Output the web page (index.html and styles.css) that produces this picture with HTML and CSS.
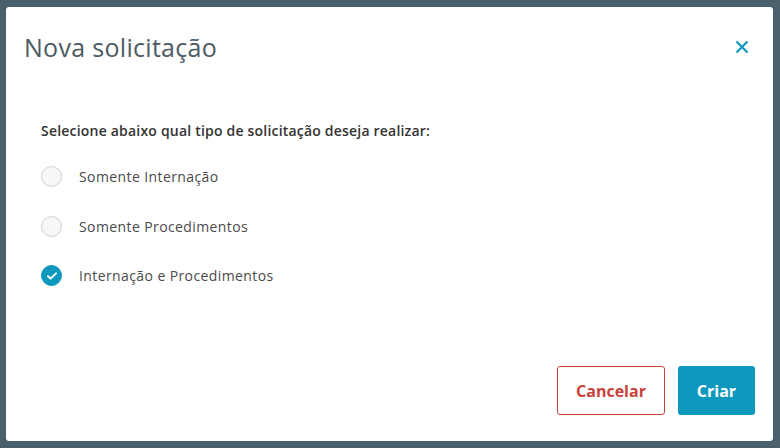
FILE: index.html
```html
<!DOCTYPE html>
<html lang="pt">
<head>
<meta charset="utf-8">
<link rel="stylesheet" href="styles.css">
</head>
<body>
<div class="dialog">
  <div class="header">
    <h1 class="title">Nova solicitação</h1>
    <button class="close" aria-label="Fechar">
      <svg width="14" height="14" viewBox="0 0 14 14"><path d="M1.5 1.5 L12.5 12.5 M12.5 1.5 L1.5 12.5" stroke="#0e98bd" stroke-width="2.2" stroke-linecap="butt"/></svg>
    </button>
  </div>
  <div class="body">
    <p class="label">Selecione abaixo qual tipo de solicitação deseja realizar:</p>
    <div class="options">
      <div class="option"><span class="radio"></span><span class="opt-text">Somente Internação</span></div>
      <div class="option"><span class="radio"></span><span class="opt-text">Somente Procedimentos</span></div>
      <div class="option"><span class="radio checked"><svg width="12" height="10" viewBox="0 0 12 10"><path d="M2 5.2 L4.6 7.6 L10 2.4" fill="none" stroke="#fff" stroke-width="2" stroke-linecap="round" stroke-linejoin="round"/></svg></span><span class="opt-text">Internação e Procedimentos</span></div>
    </div>
  </div>
  <div class="footer">
    <button class="btn btn-cancel">Cancelar</button>
    <button class="btn btn-primary">Criar</button>
  </div>
</div>
</body>
</html>
```
FILE: styles.css
```css
html, body {
  margin: 0;
  padding: 0;
}
body {
  width: 780px;
  height: 448px;
  background: #4a606c;
  font-family: "Open Sans", "Lato", sans-serif;
  padding: 7px 7px 7px 6px;
  box-sizing: border-box;
}
.dialog {
  background: #fff;
  width: 767px;
  height: 434px;
  border-radius: 3px;
  display: flex;
  flex-direction: column;
  box-sizing: border-box;
}
.header {
  display: flex;
  align-items: center;
  justify-content: space-between;
  padding: 25px 24px 0 18px;
  height: 54px;
  box-sizing: border-box;
}
.title {
  margin: 0;
  font-size: 25px;
  font-weight: 400;
  color: #4c5b63;
  letter-spacing: 0.3px;
  line-height: 32px;
}
.close {
  background: none;
  border: 0;
  padding: 0;
  width: 14px;
  height: 14px;
  display: flex;
}
.body {
  flex: 1;
  padding: 61px 0 0 35px;
}
.label {
  margin: 0;
  font-size: 14px;
  font-weight: 600;
  color: #333;
  letter-spacing: 0.2px;
  line-height: 18px;
}
.options {
  display: flex;
  flex-direction: column;
  gap: 26.5px;
  margin-top: 25px;
}
.option {
  display: flex;
  align-items: center;
  height: 23px;
}
.radio {
  width: 21px;
  height: 21px;
  border-radius: 50%;
  border: 1px solid #cfcfcf;
  background: #f7f7f7;
  box-sizing: border-box;
  display: flex;
  align-items: center;
  justify-content: center;
  margin-right: 17px;
}
.radio.checked {
  background: #0e98bd;
  border-color: #0e98bd;
}
.opt-text {
  font-size: 14px;
  color: #4a4a4a;
  letter-spacing: 0.4px;
}
.footer {
  display: flex;
  justify-content: flex-end;
  gap: 13px;
  padding: 0 18px 26px 0;
}
.btn {
  height: 49px;
  border-radius: 3px;
  font-family: inherit;
  font-size: 16px;
  font-weight: 700;
  cursor: pointer;
}
.btn-cancel {
  width: 108px;
  background: #fff;
  border: 1px solid #c8423a;
  color: #c8423a;
}
.btn-primary {
  width: 77px;
  background: #0e98bd;
  border: 0;
  color: #fff;
}
```
